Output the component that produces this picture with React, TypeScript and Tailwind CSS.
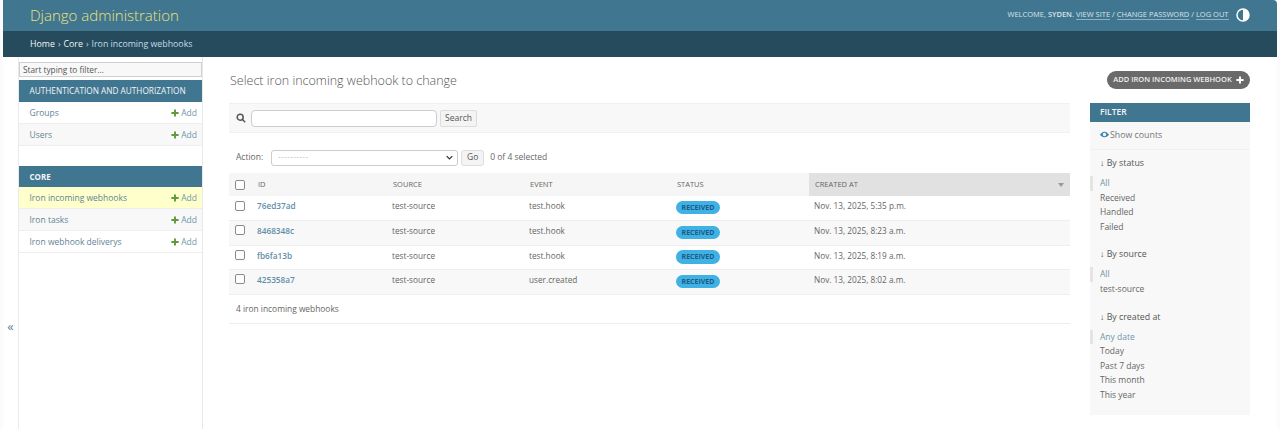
const font = { fontFamily: '"Open Sans", "Noto Sans", sans-serif' };

const rows = [
  { id: "76ed37ad", event: "test.hook", date: "Nov. 13, 2025, 5:35 p.m." },
  { id: "8468348c", event: "test.hook", date: "Nov. 13, 2025, 8:23 a.m." },
  { id: "fb6fa13b", event: "test.hook", date: "Nov. 13, 2025, 8:19 a.m." },
  { id: "425358a7", event: "user.created", date: "Nov. 13, 2025, 8:02 a.m." },
];

function Plus({ className }: { className: string }) {
  return (
    <svg viewBox="0 0 10 10" className={className} fill="currentColor">
      <path d="M3.8 0.5h2.4v3.3h3.3v2.4H6.2v3.3H3.8V6.2H0.5V3.8h3.3z" />
    </svg>
  );
}

function NavRow({ label, tone }: { label: string; tone: string }) {
  return (
    <div className={`flex h-[22px] items-center justify-between border-b border-[#eeeeee] pl-[10.5px] pr-[5px] pt-[1px] text-[8.5px] ${tone}`}>
      <span className="font-medium text-[#5f8496]">{label}</span>
      <span className="flex items-center gap-[2.5px] text-[#6f97aa]">
        <Plus className="mb-[1px] h-[8px] w-[8px] text-[#5f9a3c]" />
        Add
      </span>
    </div>
  );
}

function Sidebar() {
  return (
    <aside className="relative flex h-[372px] w-[200px] shrink-0 border-r border-[#e8e8e8] pl-[15px]">
      <div className="absolute left-0 top-[260px] flex h-[20px] w-[15px] items-center justify-center text-[13px] text-[#5f8496]">«</div>
      <div className="w-[184px] border-l border-[#eaeaea]">
        <div className="mb-[3px] mt-[5px] flex h-[15px] items-center border border-[#d0d0d0] bg-[#f8f8f8] pl-[3px] pt-[1px] text-[8.25px] text-[#555555]">Start typing to filter...</div>
        <div className="flex h-[22px] items-center bg-[#417690] pl-[10.5px] text-[8.25px] font-medium text-[#f2f5f7]">AUTHENTICATION AND AUTHORIZATION</div>
        <NavRow label="Groups" tone="bg-white" />
        <NavRow label="Users" tone="bg-[#f8f8f8]" />
        <div className="mt-[20px] flex h-[21px] items-center bg-[#417690] pl-[10.5px] text-[8px] font-bold text-[#f2f5f7]">CORE</div>
        <NavRow label="Iron incoming webhooks" tone="bg-[#ffffcc]" />
        <NavRow label="Iron tasks" tone="bg-[#f8f8f8]" />
        <NavRow label="Iron webhook deliverys" tone="bg-white" />
      </div>
    </aside>
  );
}

function Checkbox() {
  return <span className="block h-[10px] w-[10px] rounded-[2px] border border-[#8a8a8a] bg-white" />;
}

function ChangeList() {
  return (
    <section className="w-[841px] shrink-0">
      <h1 className="mt-[15px] h-[31px] pl-[1px] text-[12.5px] font-light leading-[18px] text-[#555555]">Select iron incoming webhook to change</h1>
      <div className="flex h-[30px] items-center border-y border-[#f0f0f0] bg-[#f8f8f8] pl-[7px]">
        <svg viewBox="0 0 12 12" className="h-[10px] w-[10px] text-[#555555]" fill="none" stroke="currentColor" strokeWidth="1.8">
          <circle cx="5" cy="5" r="3.6" />
          <path d="M7.8 7.8 11 11" />
        </svg>
        <span className="ml-[5px] block h-[17px] w-[186px] rounded-[4px] border border-[#cccccc] bg-white" />
        <span className="ml-[3px] flex h-[17px] w-[37px] items-center justify-center rounded-[2px] border border-[#dddddd] bg-[#f4f4f4] text-[8.5px] text-[#555555]">Search</span>
      </div>
      <div className="mt-[15px] flex h-[19px] items-center pl-[7px] text-[8.5px] text-[#666666]">
        <span>Action:</span>
        <span className="ml-[8px] flex h-[16px] w-[187px] items-center justify-between rounded-[3px] border border-[#cccccc] bg-white pl-[6px] pr-[4px] text-[#aaaaaa]">
          <span className="text-[7px] tracking-[0.8px]">----------</span>
          <svg viewBox="0 0 10 6" className="h-[5px] w-[7px] text-[#333333]" fill="none" stroke="currentColor" strokeWidth="1.8">
            <path d="M1 1l4 4 4-4" />
          </svg>
        </span>
        <span className="ml-[3px] flex h-[16px] w-[23px] items-center justify-center rounded-[3px] border border-[#dddddd] bg-[#f4f4f4] text-[#555555]">Go</span>
        <span className="ml-[6px]">0 of 4 selected</span>
      </div>
      <table className="mt-[6px] w-full border-collapse text-[8.25px] text-[#666666]">
        <thead>
          <tr className="h-[23px] bg-[#f6f6f6] text-[7.5px] text-[#666666]">
            <th className="w-[27px] pl-[6px] font-normal"><Checkbox /></th>
            <th className="w-[136px] text-left font-normal"><span className="pl-[2px]">ID</span></th>
            <th className="w-[137px] text-left font-normal"><span className="pl-[1px]">SOURCE</span></th>
            <th className="w-[147px] text-left font-normal"><span className="pl-[1px]">EVENT</span></th>
            <th className="w-[133px] text-left font-normal"><span className="pl-[1px]">STATUS</span></th>
            <th className="bg-[#e1e1e1] pl-[6px] text-left font-normal">
              <span className="flex items-center justify-between pr-[6px]">
                CREATED AT
                <span className="h-0 w-0 border-x-[3px] border-t-[4px] border-x-transparent border-t-[#999999]" />
              </span>
            </th>
          </tr>
        </thead>
        <tbody>
          {rows.map((row, i) => (
            <tr key={row.id} className={`h-[24.5px] border-b border-[#eeeeee] ${i % 2 ? "bg-[#f8f8f8]" : "bg-white"}`}>
              <td className="pb-[5px] pl-[6px]"><Checkbox /></td>
              <td className="pb-[3px] pl-[1px] font-semibold text-[#5f8fa8]">{row.id}</td>
              <td className="pb-[3px]">test-source</td>
              <td className="pb-[3px]">{row.event}</td>
              <td className="pb-[1px]">
                <span className="block h-[13.5px] w-[44px] rounded-full bg-[#3fb1e5] text-center text-[7px] font-bold leading-[13.5px] text-[#1d5b85]">RECEIVED</span>
              </td>
              <td className="pb-[3px] pl-[5px]">{row.date}</td>
            </tr>
          ))}
        </tbody>
      </table>
      <div className="flex h-[29px] items-center border-b border-[#eeeeee] pl-[7px] pt-[1px] text-[8.4px] text-[#666666]">4 iron incoming webhooks</div>
    </section>
  );
}

function FilterGroup({ title, items }: { title: string; items: string[] }) {
  return (
    <div className="pb-[13px]">
      <div className="mb-[6px] pl-[10px] pt-[1px] text-[8.8px] leading-[13px] text-[#555555]">↓ By {title}</div>
      {items.map((item, i) => (
        <div
          key={item}
          className={`h-[14.6px] text-[8.5px] leading-[14.6px] ${i === 0 ? "border-l-[3px] border-[#e4e4e4] pl-[7px] text-[#6f97aa]" : "pl-[10px] text-[#666666]"}`}
        >
          {item}
        </div>
      ))}
    </div>
  );
}

function RightColumn() {
  return (
    <div className="ml-[20px] flex w-[160px] shrink-0 flex-col items-end pt-[14px]">
      <div className="mb-[14px] flex h-[18px] w-[143px] items-center justify-center gap-[4px] rounded-full bg-[#6a6a6a] text-[7.5px] font-semibold text-[#f0f0f0]">
        ADD IRON INCOMING WEBHOOK
        <Plus className="h-[8px] w-[8px] text-white" />
      </div>
      <aside className="h-[312px] w-full bg-[#f8f8f8]">
        <div className="flex h-[19px] items-center bg-[#417690] pl-[10px] text-[8.5px] font-semibold text-[#f2f5f7]">FILTER</div>
        <div className="flex h-[28px] items-center gap-[1px] border-b border-[#f0f0f0] pl-[10px] pt-[1px] text-[8.8px] text-[#777777]">
          <svg viewBox="0 0 16 16" className="mb-[4px] h-[9px] w-[9px] text-[#3d86b0]" fill="currentColor">
            <path d="M8 3C4 3 1 7 0 8.500c1 1.500 4 4.500 8 4.500s7-3 8-4.500C15 7 12 3 8 3zm0 8a3 3 0 1 1 0-6 3 3 0 0 1 0 6z" />
          </svg>
          Show counts
        </div>
        <div className="pt-[6px]">
          <FilterGroup title="status" items={["All", "Received", "Handled", "Failed"]} />
          <FilterGroup title="source" items={["All", "test-source"]} />
          <FilterGroup title="created at" items={["Any date", "Today", "Past 7 days", "This month", "This year"]} />
        </div>
      </aside>
    </div>
  );
}

export default function App() {
  return (
    <div style={font} className="h-[429px] w-[1280px] overflow-hidden bg-[#fbfbfb] pl-[3px] pr-[3.5px]">
      <div className="h-[429px] bg-white">
        <header className="flex h-[31px] items-center justify-between rounded-tr-[4px] bg-[#417690] pl-[27px] pr-[27px]">
          <span className="text-[15px] font-light text-[#ebe27c]">Django administration</span>
          <div className="mb-[2px] flex items-center gap-[7px] text-[7.5px] text-[#d6e4ea]">
            <span>
              WELCOME, <b className="font-semibold">SYDEN</b>.{" "}
              <span className="border-b border-[#8fb0c0]">VIEW SITE</span> /{" "}
              <span className="border-b border-[#8fb0c0]">CHANGE PASSWORD</span> /{" "}
              <span className="border-b border-[#8fb0c0]">LOG OUT</span>
            </span>
            <svg viewBox="0 0 14 14" className="h-[14px] w-[14px]">
              <circle cx="7" cy="7" r="6" fill="none" stroke="#ffffff" strokeWidth="1.500" />
              <path d="M7 1a6 6 0 0 1 0 12z" fill="#ffffff" />
            </svg>
          </div>
        </header>
        <nav className="flex h-[26px] items-center bg-[#264b5d] pl-[27px] pt-[2px] text-[8.8px] text-[#c4dce8]">
          <span className="font-medium text-[#f2f5f7]">Home</span>
          <span className="mx-[3px]">›</span>
          <span className="font-medium text-[#f2f5f7]">Core</span>
          <span className="mx-[3px]">›</span>
          <span>Iron incoming webhooks</span>
        </nav>
        <div className="flex">
          <Sidebar />
          <main className="flex pl-[26px]">
            <ChangeList />
            <RightColumn />
          </main>
        </div>
      </div>
    </div>
  );
}
